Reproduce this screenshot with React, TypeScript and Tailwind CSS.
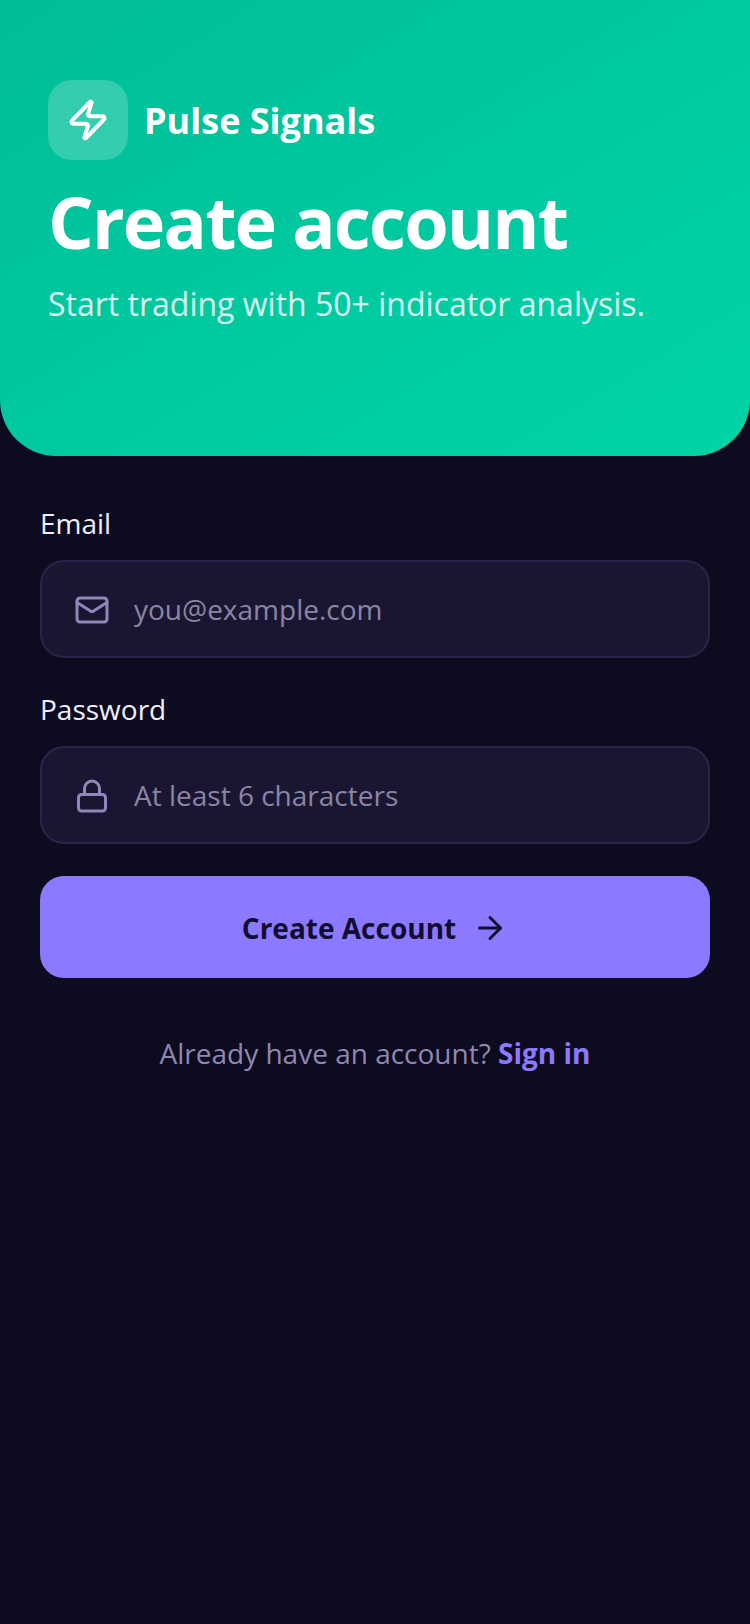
import * as React from 'react';
import { ArrowRight, Lock, Mail, Zap } from 'lucide-react';

const Field: React.FC<{
  label: string;
  placeholder: string;
  type: string;
  icon: React.ReactNode;
}> = ({ label, placeholder, type, icon }) => {
  return (
    <div>
      <label className="block text-[28px] leading-[38px] text-[#f1effc] mb-[18px]">{label}</label>
      <div className="h-[98px] flex items-center gap-[24px] px-[32px] bg-[#1a1632] border-2 border-[#2a2548] rounded-[24px]">
        <span className="w-[36px] h-[36px] mt-[2px] flex items-center justify-center text-[#9088bc]">{icon}</span>
        <input
          type={type}
          placeholder={placeholder}
          className="flex-1 bg-transparent outline-none text-[28px] text-white placeholder:text-[#8a85a5]"
        />
      </div>
    </div>
  );
};

export default function App() {
  return (
    <div className="min-h-[1624px] bg-[#0d0b20] font-['Open_Sans',sans-serif]">
      {/* Header */}
      <header className="h-[456px] pt-[80px] px-[48px] rounded-b-[56px] bg-gradient-to-br from-[#00bd98] to-[#00d4a6]">
        <div className="flex items-center gap-[16px]">
          <div className="w-[80px] h-[80px] rounded-[24px] bg-white/20 flex items-center justify-center">
            <Zap size={44} strokeWidth={2.2} className="text-white" />
          </div>
          <span className="text-[36px] leading-[50px] font-bold text-white mt-[2px]">Pulse Signals</span>
        </div>
        <h1 className="text-[72px] leading-[98px] font-bold tracking-[-1.85px] text-white mt-[12px]">Create account</h1>
        <p className="text-[32px] leading-[44px] text-white/85 mt-[12px]">Start trading with 50+ indicator analysis.</p>
      </header>

      {/* Form */}
      <main className="px-[40px] pt-[48px]">
        <div className="flex flex-col gap-[32px]">
          <Field label="Email" type="email" placeholder="you@example.com" icon={<Mail size={36} strokeWidth={2} />} />
          <Field label="Password" type="password" placeholder="At least 6 characters" icon={<Lock size={36} strokeWidth={2} />} />
        </div>
        <button className="w-full h-[102px] mt-[32px] pt-[2px] rounded-[24px] bg-[#8b7aff] flex items-center justify-center gap-[16px] text-[28px] font-bold text-[#120c30]">
          Create Account
          <ArrowRight size={36} strokeWidth={2} />
        </button>
        <p className="text-center text-[28px] text-[#9088b0] mt-[54px]">
          Already have an account? <span className="font-bold text-[#8b7aff]">Sign in</span>
        </p>
      </main>
    </div>
  );
}
